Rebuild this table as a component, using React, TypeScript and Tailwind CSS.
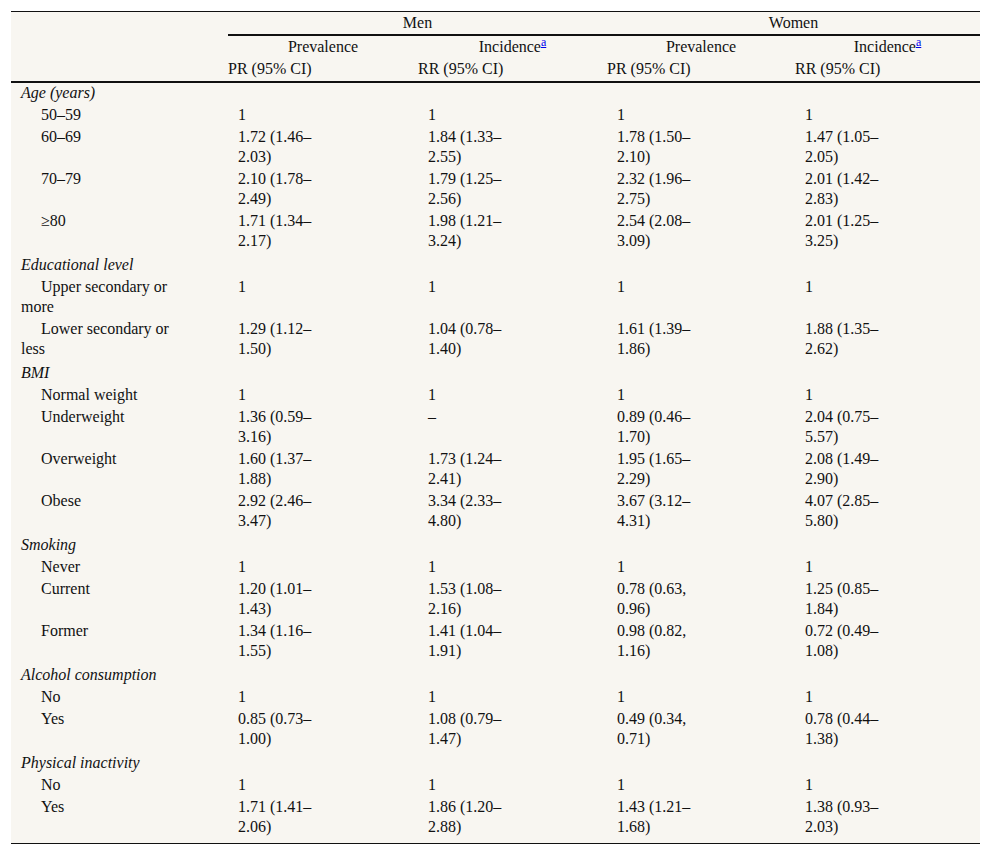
type Row = { group?: string; label?: string; cells?: string[] };

const rows: Row[] = [
  { group: "Age (years)" },
  { label: "50–59", cells: ["1", "1", "1", "1"] },
  { label: "60–69", cells: ["1.72 (1.46–|2.03)", "1.84 (1.33–|2.55)", "1.78 (1.50–|2.10)", "1.47 (1.05–|2.05)"] },
  { label: "70–79", cells: ["2.10 (1.78–|2.49)", "1.79 (1.25–|2.56)", "2.32 (1.96–|2.75)", "2.01 (1.42–|2.83)"] },
  { label: "≥80", cells: ["1.71 (1.34–|2.17)", "1.98 (1.21–|3.24)", "2.54 (2.08–|3.09)", "2.01 (1.25–|3.25)"] },
  { group: "Educational level" },
  { label: "Upper secondary or|more", cells: ["1", "1", "1", "1"] },
  { label: "Lower secondary or|less", cells: ["1.29 (1.12–|1.50)", "1.04 (0.78–|1.40)", "1.61 (1.39–|1.86)", "1.88 (1.35–|2.62)"] },
  { group: "BMI" },
  { label: "Normal weight", cells: ["1", "1", "1", "1"] },
  { label: "Underweight", cells: ["1.36 (0.59–|3.16)", "–", "0.89 (0.46–|1.70)", "2.04 (0.75–|5.57)"] },
  { label: "Overweight", cells: ["1.60 (1.37–|1.88)", "1.73 (1.24–|2.41)", "1.95 (1.65–|2.29)", "2.08 (1.49–|2.90)"] },
  { label: "Obese", cells: ["2.92 (2.46–|3.47)", "3.34 (2.33–|4.80)", "3.67 (3.12–|4.31)", "4.07 (2.85–|5.80)"] },
  { group: "Smoking" },
  { label: "Never", cells: ["1", "1", "1", "1"] },
  { label: "Current", cells: ["1.20 (1.01–|1.43)", "1.53 (1.08–|2.16)", "0.78 (0.63,|0.96)", "1.25 (0.85–|1.84)"] },
  { label: "Former", cells: ["1.34 (1.16–|1.55)", "1.41 (1.04–|1.91)", "0.98 (0.82,|1.16)", "0.72 (0.49–|1.08)"] },
  { group: "Alcohol consumption" },
  { label: "No", cells: ["1", "1", "1", "1"] },
  { label: "Yes", cells: ["0.85 (0.73–|1.00)", "1.08 (0.79–|1.47)", "0.49 (0.34,|0.71)", "0.78 (0.44–|1.38)"] },
  { group: "Physical inactivity" },
  { label: "No", cells: ["1", "1", "1", "1"] },
  { label: "Yes", cells: ["1.71 (1.41–|2.06)", "1.86 (1.20–|2.88)", "1.43 (1.21–|1.68)", "1.38 (0.93–|2.03)"] },
];

function Lines({ text }: { text: string }) {
  const parts = text.split("|");
  return (
    <>
      {parts.map((p, i) => (
        <span key={i}>
          {i > 0 && <br />}
          {p}
        </span>
      ))}
    </>
  );
}

function Sup() {
  return <sup className="text-[12px] text-[#0000ee] underline">a</sup>;
}

export default function App() {
  const last = rows.length - 1;
  return (
    <div className="min-h-screen bg-white px-[11px] pt-[11px] font-['Liberation_Serif',serif] text-[16px] leading-[20px] text-[#111]">
      <table className="w-[969px] table-fixed border-collapse border-t border-b border-[#111] bg-[#f8f6f1]">
        <colgroup>
          <col className="w-[217px]" />
          <col className="w-[190px]" />
          <col className="w-[189px]" />
          <col className="w-[188px]" />
          <col className="w-[185px]" />
        </colgroup>
        <thead>
          <tr>
            <th className="p-0" />
            <th colSpan={2} className="border-b-2 border-[#111] py-px text-center font-normal">
              Men
            </th>
            <th colSpan={2} className="border-b-2 border-[#111] py-px text-center font-normal">
              Women
            </th>
          </tr>
          <tr>
            <th className="p-0" />
            <th className="py-px text-center font-normal">Prevalence</th>
            <th className="py-px text-center font-normal">
              Incidence
              <Sup />
            </th>
            <th className="py-px text-center font-normal">Prevalence</th>
            <th className="py-px text-center font-normal">
              Incidence
              <Sup />
            </th>
          </tr>
          <tr className="border-b-2 border-[#111]">
            <th className="p-0" />
            <th className="pt-px pb-[2px] text-left font-normal">PR (95% CI)</th>
            <th className="pt-px pb-[2px] text-left font-normal">RR (95% CI)</th>
            <th className="pt-px pb-[2px] text-left font-normal">PR (95% CI)</th>
            <th className="pt-px pb-[2px] text-left font-normal">RR (95% CI)</th>
          </tr>
        </thead>
        <tbody>
          {rows.map((row, i) =>
            row.group ? (
              <tr key={i}>
                <td
                  colSpan={5}
                  className={
                    i === 0
                      ? "pt-0 pb-px pl-[10px] align-top italic"
                      : "pt-[3px] pb-px pl-[10px] align-top italic"
                  }
                >
                  {row.group}
                </td>
              </tr>
            ) : (
              <tr key={i} className={i === last ? "[&>td]:pb-[6px]" : ""}>
                <td className="py-px pl-[10px] indent-[20px] align-top">
                  <Lines text={row.label ?? ""} />
                </td>
                {row.cells?.map((c, j) => (
                  <td key={j} className="py-px pl-[10px] align-top">
                    <Lines text={c} />
                  </td>
                ))}
              </tr>
            ),
          )}
        </tbody>
      </table>
    </div>
  );
}
